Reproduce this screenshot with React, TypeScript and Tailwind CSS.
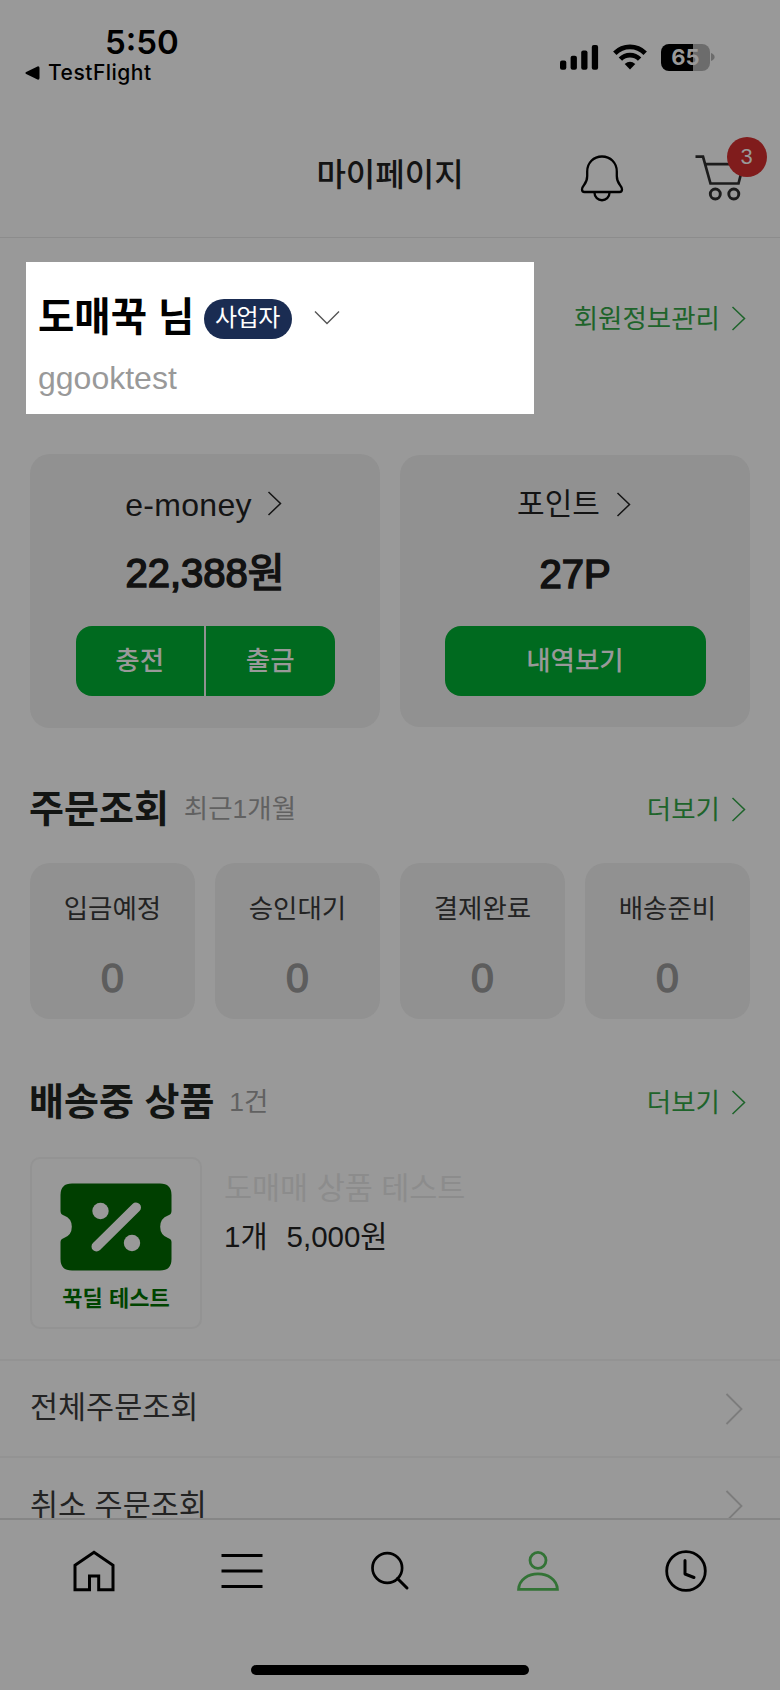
import React from "react";

const ORDER_STATES = ["입금예정", "승인대기", "결제완료", "배송준비"];

function Chevron({ w = 15, h = 25, stroke = 1.5, className = "" }: { w?: number; h?: number; stroke?: number; className?: string }) {
  return (
    <svg width={w} height={h} viewBox={`0 0 ${w} ${h}`} fill="none" stroke="currentColor" strokeWidth={stroke} className={className}>
      <path d={`M1.5 1 L${w - 1.5} ${h / 2} L1.5 ${h - 1}`} />
    </svg>
  );
}

function StatusBar() {
  return (
    <div className="flex h-[110px] shrink-0 justify-between font-[Inter,sans-serif] text-black">
      <div className="pt-[22px]">
        <div className="pt-px pl-[105px] text-[33px] leading-[39px] font-semibold">5:50</div>
        <div className="flex items-center pl-[25px] text-[21px] leading-[22px] font-medium tracking-[0.5px]">
          <svg width="15" height="14" viewBox="0 0 15 14" className="mr-[8px]">
            <path d="M1.2 6 L12.5 0.4 Q14.5 0 14.5 2 V12 Q14.5 14 12.5 13.6 L1.2 8 Q-0.4 7 1.2 6Z" />
          </svg>
          <span>TestFlight</span>
        </div>
      </div>
      <div className="flex items-start pt-[43px] pr-[65px]">
        <svg width="39" height="27" viewBox="0 0 39 27">
          <rect x="0" y="17.5" width="6.3" height="9.2" rx="2" />
          <rect x="10.6" y="12.8" width="6.3" height="13.9" rx="2" />
          <rect x="21.2" y="7.5" width="6.3" height="19.2" rx="2" />
          <rect x="31.8" y="2" width="6.3" height="24.7" rx="2" />
        </svg>
        <svg width="34" height="27" viewBox="0 0 34 27" className="ml-[14px]" fill="none" stroke="black" strokeWidth="4.8">
          <path d="M1.8 10.2 A21.5 21.5 0 0 1 32.2 10.2" />
          <path d="M7.4 16.1 A13.6 13.6 0 0 1 26.6 16.1" />
          <path d="M17 26.6 L11.7 21 Q17 16.4 22.3 21 Z" fill="black" stroke="none" />
        </svg>
        <div className="mt-px ml-[14px] flex h-[27px] w-[49px] items-center justify-center overflow-hidden rounded-[8px] bg-[linear-gradient(to_right,#000_66%,#6c6c6c_66%)] text-[22px] leading-[27px] font-bold text-[#999999]">
          65
        </div>
        <svg width="4" height="9" viewBox="0 0 4 9" className="mt-[10px] ml-px">
          <path d="M0 0 Q3.6 1.5 3.6 4 Q3.6 6.500 0 8Z" fill="#6c6c6c" />
        </svg>
      </div>
    </div>
  );
}

function Header() {
  return (
    <header className="grid h-[128px] shrink-0 grid-cols-[1fr_auto_1fr] border-b border-[#8c8c8c]">
      <span />
      <h1 className="pt-[43px] text-[32px] leading-[44px] font-medium text-[#141414]">마이페이지</h1>
      <div className="flex pt-[27px]">
        <svg width="44" height="50" viewBox="0 0 44 50" fill="none" stroke="black" strokeWidth="2.3" className="mt-[17px] ml-[116px]">
          <path d="M22 2.500 C13.500 2.500 7.200 9 7.200 17.500 V22 C7.200 31 2 30.500 2 35.500 Q2 38 4.500 38 H39.500 Q42 38 42 35.500 C42 30.500 36.800 31 36.800 22 V17.500 C36.800 9 30.500 2.500 22 2.500Z" />
          <path d="M14.400 38 C14.400 49 29.600 49 29.600 38" />
        </svg>
        <div className="relative ml-[71px] h-[66px] w-[73px]">
          <svg width="50" height="48" viewBox="0 0 50 48" fill="none" stroke="#1c1c1c" strokeWidth="2.7" className="absolute top-[17px] left-0">
            <path d="M0.500 2.600 H8 L15.500 29.500 H43.500 L48.500 10.200 H10" />
            <circle cx="20.300" cy="40" r="5" strokeWidth="2.900" />
            <circle cx="38.800" cy="40" r="5" strokeWidth="2.900" />
          </svg>
          <span className="absolute top-0 left-[32px] flex h-[40px] w-[40px] items-center justify-center rounded-full bg-[#801c1c] text-[22px] leading-none text-[#999999]">3</span>
        </div>
      </div>
    </header>
  );
}

function Profile() {
  return (
    <section className="flex h-[216px] shrink-0 justify-between pt-[24px] pr-[34px] pl-[26px]">
      <div className="h-[152px] w-[508px] bg-white pl-[12px]">
        <div className="flex pt-[34px]">
          <span className="text-[39.5px] leading-[42px] font-bold text-black">도매꾹 님</span>
          <span className="mt-[3px] ml-[10px] flex h-[40px] w-[88px] items-center justify-center rounded-full bg-[#1a2c52] pr-[2px] pb-[2px] text-[24px] leading-none tracking-[-0.5px] text-white">사업자</span>
          <svg width="26" height="16" viewBox="0 0 26 16" fill="none" stroke="#555" strokeWidth="1.400" className="mt-[14px] ml-[22px]">
            <path d="M1 1.500 L13 13.500 L25 1.500" />
          </svg>
        </div>
        <div className="mt-[20px] text-[32px] leading-[38px] text-[#999999]">ggooktest</div>
      </div>
      <a className="flex h-[30px] pt-[42px] text-[26.5px] leading-[30px] text-[#1e642b]">
        회원정보관리
        <Chevron className="mt-[2px] ml-[11px]" />
      </a>
    </section>
  );
}

function Balances() {
  return (
    <section className="flex h-[274px] shrink-0 items-center gap-[20px] px-[30px]">
      <div className="flex h-[274px] w-[350px] flex-col items-center rounded-[20px] bg-[#919191] text-[#141414]">
        <div className="flex pt-[33px] pr-[3px] text-[32px] leading-[36px] tracking-[0.3px]">
          e-money
          <Chevron className="mt-[4px] ml-[15px]" />
        </div>
        <div className="mt-[28px] text-[40px] leading-[44px] text-[#121212] [-webkit-text-stroke:1.6px_#121212]">22,388원</div>
        <div className="mt-[31px] flex h-[70px] w-[259px] gap-[2px] overflow-hidden rounded-[16px] text-[26.5px] leading-[68px] font-medium text-[#999999]">
          <button className="flex-1 bg-[#006a1f]">충전</button>
          <button className="flex-1 bg-[#006a1f]">출금</button>
        </div>
      </div>
      <div className="flex h-[272px] w-[350px] flex-col items-center rounded-[20px] bg-[#919191] text-[#141414]">
        <div className="flex pt-[31px] pr-[2px] text-[30px] leading-[36px]">
          포인트
          <Chevron className="mt-[6px] ml-[16px]" />
        </div>
        <div className="mt-[30px] text-[40px] leading-[44px] text-[#121212] [-webkit-text-stroke:1.6px_#121212]">27P</div>
        <button className="mt-[30px] h-[70px] w-[261px] rounded-[16px] bg-[#006a1f] text-[26.5px] leading-[68px] font-medium text-[#999999]">내역보기</button>
      </div>
    </section>
  );
}

function SectionTitle({ title, note }: { title: string; note: string }) {
  return (
    <div className="flex h-[44px] items-center">
      <h2 className="-ml-px text-[38px] leading-[44px] font-bold text-[#131513]">{title}</h2>
      <span className="ml-[15px] text-[26.5px] leading-[44px] text-[#616161]">{note}</span>
      <a className="ml-auto flex items-center pt-px pr-[4px] text-[26.5px] leading-[44px] text-[#1e642b]">
        더보기
        <Chevron className="ml-[11px]" />
      </a>
    </div>
  );
}

function Orders() {
  return (
    <section className="h-[291px] shrink-0 px-[30px] pt-[59px]">
      <SectionTitle title="주문조회" note="최근1개월" />
      <div className="mt-[32px] grid grid-cols-4 gap-[20px]">
        {ORDER_STATES.map((s) => (
          <div key={s} className="flex h-[156px] flex-col items-center rounded-[20px] bg-[#919191]">
            <span className="mt-[31px] text-[26.5px] leading-[30px] text-[#232323]">{s}</span>
            <span className="mt-[32px] text-[41px] leading-[44px] text-[#5d5d5d] [-webkit-text-stroke:1.4px_#5d5d5d]">0</span>
          </div>
        ))}
      </div>
    </section>
  );
}

function Shipping() {
  return (
    <section className="h-[340px] shrink-0 px-[30px] pt-[61px]">
      <SectionTitle title="배송중 상품" note="1건" />
      <div className="mt-[33px] flex">
        <div className="flex h-[172px] w-[172px] flex-col items-center rounded-[10px] border-2 border-[#939393]">
          <svg width="112" height="88" viewBox="0 0 112 88" className="mt-[24px]">
            <path
              fill="#003f00"
              d="M12 0.500 H100 Q111.500 0.500 111.500 12 V28 Q111.500 31.500 108 32.500 A12 12 0 0 0 108 55 Q111.500 56 111.500 59 V76 Q111.500 87.500 100 87.500 H12 Q0.500 87.500 0.500 76 V59 Q0.500 56 4 55 A12 12 0 0 0 4 32.500 Q0.500 31.500 0.500 28 V12 Q0.500 0.500 12 0.500Z"
            />
            <circle cx="40.500" cy="28" r="8.200" fill="#999999" />
            <circle cx="72" cy="60" r="8.200" fill="#999999" />
            <path d="M36.500 63.500 L76 24.500" stroke="#999999" strokeWidth="10" strokeLinecap="round" />
          </svg>
          <span className="mt-[15px] text-[22px] leading-[26px] font-bold text-[#004400]">꾹딜 테스트</span>
        </div>
        <div className="pl-[22px]">
          <div className="pt-[13px] text-[30.5px] leading-[36px] text-[#8c8c8c]">도매매 상품 테스트</div>
          <div className="flex gap-[19px] pt-[13px] text-[29.5px] leading-[36px] text-[#141414]">
            <span>1개</span>
            <span>5,000원</span>
          </div>
        </div>
      </div>
    </section>
  );
}

function MenuRow({ label, first }: { label: string; first?: boolean }) {
  return (
    <div className={"flex shrink-0 items-center justify-between border-t-2 border-[#939393] pr-[37px] pl-[30px] text-[30.5px] leading-[40px] text-[#232323]" + (first ? " h-[97px]" : " h-[98px]")}>
      <span className="pb-[3px]">{label}</span>
      <Chevron w={18} h={32} stroke={1.8} className="text-[#7c7c7c]" />
    </div>
  );
}

function TabBar() {
  return (
    <nav className="h-[172px] shrink-0 border-t-2 border-[#868686] bg-[#999999]">
      <div className="flex h-[102px] items-center justify-between px-[73px]">
        <svg width="42" height="42" viewBox="0 0 42 42" fill="none" stroke="black" strokeWidth="3">
          <path d="M2 15.200 L21 2.300 L40 15.200 V39.800 H25.700 V26 H16.500 V39.800 H2 Z" />
        </svg>
        <svg width="42" height="42" viewBox="0 0 42 42" stroke="black" strokeWidth="3">
          <path d="M0.500 5.500 H41.500 M0.500 21 H41.500 M0.500 36.500 H41.500" />
        </svg>
        <svg width="42" height="42" viewBox="0 0 42 42" fill="none" stroke="black" strokeWidth="2.700">
          <circle cx="18.300" cy="18" r="14.800" />
          <path d="M28.500 28.500 L38 38" strokeWidth="3" strokeLinecap="round" />
        </svg>
        <svg width="42" height="42" viewBox="0 0 42 42" fill="none" stroke="#337336" strokeWidth="2.800">
          <circle cx="21" cy="10.300" r="8" />
          <path d="M1.600 39.300 C2.600 18.800 39.400 18.800 40.400 39.300 Z" />
        </svg>
        <svg width="42" height="42" viewBox="0 0 42 42" fill="none" stroke="black" strokeWidth="2.800">
          <circle cx="21" cy="21" r="19.300" />
          <path d="M20 10.500 V24 L29 27.500" strokeWidth="3" strokeLinecap="round" strokeLinejoin="round" />
        </svg>
      </div>
      <div className="mx-auto mt-[43px] h-[10px] w-[278px] rounded-full bg-black" />
    </nav>
  );
}

export default function App() {
  return (
    <div className="flex h-[1690px] w-[780px] flex-col overflow-hidden bg-[#999999] font-['Liberation_Sans','Noto_Sans_CJK_KR',sans-serif]">
      <StatusBar />
      <Header />
      <main className="flex h-[1280px] shrink-0 flex-col overflow-hidden">
        <Profile />
        <Balances />
        <Orders />
        <Shipping />
        <MenuRow label="전체주문조회" first />
        <MenuRow label="취소 주문조회" />
      </main>
      <TabBar />
    </div>
  );
}
